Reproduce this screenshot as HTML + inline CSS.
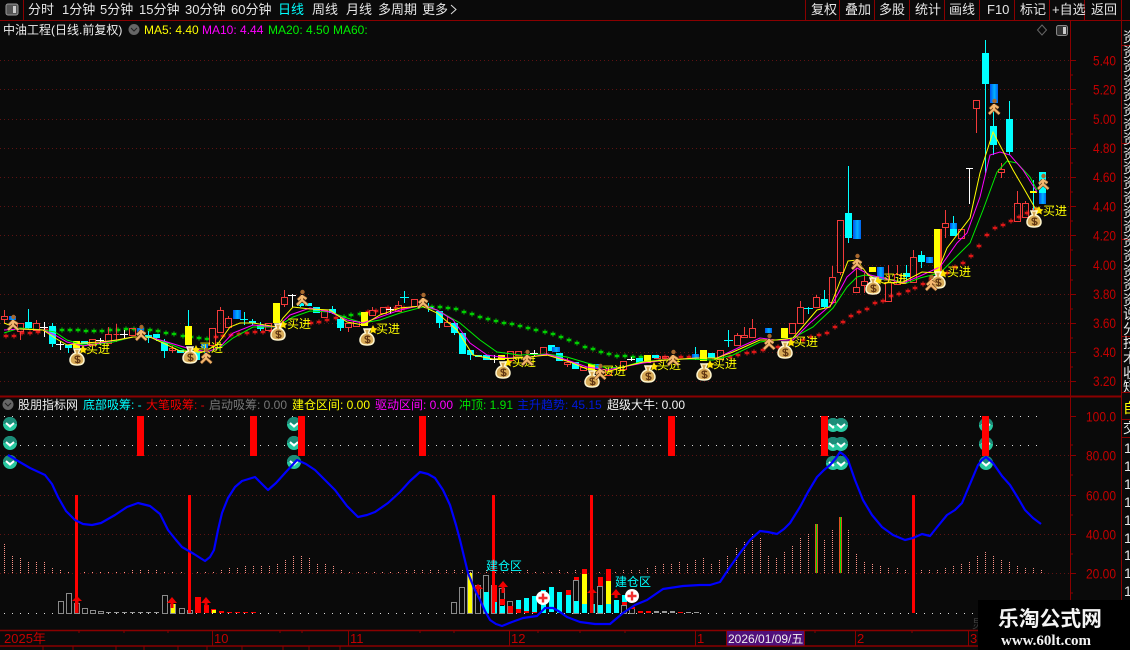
<!DOCTYPE html>
<html><head><meta charset="utf-8"><style>
html,body{margin:0;padding:0;background:#0a0a0a}
#w{position:relative;width:1130px;height:650px;overflow:hidden;background:#0a0a0a}
svg{position:absolute;left:0;top:0}
text{font-family:"Liberation Sans","WenQuanYi Zen Hei","Noto Sans CJK SC",sans-serif;font-size:12px}
.t{font-size:13px;fill:#e6e6e6}
.a{font-size:14px;fill:#c40000}
.m{fill:#ffff00;font-size:12px}
#c{position:absolute;left:1123px;top:30px;width:7px;height:362px;overflow:hidden;font:14px/14.6px "WenQuanYi Zen Hei","Noto Sans CJK SC",sans-serif;color:#e8e8e8;white-space:nowrap}
#d{position:absolute;left:1124px;top:440px;width:6px;height:160px;overflow:hidden;font:14px/17.9px "Liberation Sans",sans-serif;color:#e8e8e8}
</style></head><body><div id="w">
<svg width="1130" height="650" viewBox="0 0 1130 650">
<defs>
<linearGradient id="g" x1="0" x2="1" y1="0" y2="0"><stop offset="0" stop-color="#0050f0"/><stop offset=".55" stop-color="#00b4ff"/><stop offset="1" stop-color="#0060f0"/></linearGradient>
<marker id="sr" markerUnits="userSpaceOnUse" markerWidth="5" markerHeight="5" refX="2.500" refY="2.500"><path d="M2.500 0V5M0 1.500L5 3.500M0 3.500L5 1.500" stroke="#f01818" fill="none"/></marker>
<marker id="sg" markerUnits="userSpaceOnUse" markerWidth="5" markerHeight="5" refX="2.500" refY="2.500"><path d="M2.500 0V5M0 1.500L5 3.500M0 3.500L5 1.500" stroke="#00e000" fill="none"/></marker>
<symbol id="b" viewBox="0 0 16 18" overflow="visible"><path d="M5 1h6l-1.500 4c4 1.500 5.500 4.500 5.500 7 0 4-3 5-7 5s-7-1-7-5c0-2.500 1.500-5.500 5.500-7z" fill="#d8ab58" stroke="#fff6cf" stroke-width="1.500"/><path d="M11 9c-1.500-1.500-5-1.300-5 .7 0 2.300 5 1 5 3.300 0 2-3.500 2-5 .6M8.500 7.500v8" stroke="#5c3210" stroke-width="1.200" fill="none"/></symbol>
<symbol id="h" viewBox="0 0 16 18" overflow="visible"><circle cx="8.500" cy="3" r="2.200" fill="#a8682e"/><path d="M8 6V11M8 7L4 11M8 7L12.500 10M8 11L3 16M8 11L13.500 16" stroke="#7a4a20" stroke-width="3.400" fill="none"/><path d="M8 6V11M8 7L4 11M8 7L12.500 10M8 11L3 16M8 11L13.500 16" stroke="#f4b870" stroke-width="2" fill="none"/></symbol>
<symbol id="v" viewBox="0 0 14 14" overflow="visible"><circle cx="7" cy="7" r="7" fill="#28c8a0"/><path d="M0 7a7 7 0 0 1 14 0z" fill="#1c8c78"/><path d="M3 6L7 9.500L11 6" stroke="#fff" stroke-width="2" fill="none"/></symbol>
<symbol id="p" viewBox="0 0 14 14" overflow="visible"><circle cx="7" cy="7" r="7" fill="#fff"/><path d="M7 2.500V11.500M2.500 7H11.500" stroke="#f03030" stroke-width="2.400"/></symbol>
</defs>

<!-- top bar -->
<path d="M0 20.500H1130M23.500 0V20" stroke="#8a0000" fill="none"/>
<path d="M805.500 0V20M839.500 0V20M874.500 0V20M909.500 0V20M944.500 0V20M979.500 0V20M1014.500 0V20M1049.500 0V20M1084.500 0V20M1121.500 0V20" stroke="#8a0000"/>
<rect x="6" y="4" width="12" height="11" rx="2" fill="#555" stroke="#9a9a9a"/><rect x="13" y="6" width="3" height="7" fill="#ccc"/>
<text class="t" x="28" y="14">分时</text><text class="t" x="62" y="14">1分钟</text><text class="t" x="100" y="14">5分钟</text><text class="t" x="139" y="14">15分钟</text><text class="t" x="185" y="14">30分钟</text><text class="t" x="231" y="14">60分钟</text>
<text class="t" x="278" y="14" style="fill:#00ffff">日线</text><text class="t" x="312" y="14">周线</text><text class="t" x="346" y="14">月线</text><text class="t" x="378" y="14">多周期</text><text class="t" x="422" y="14">更多</text>
<path d="M451 5L456 9.500L451 14" stroke="#ddd" fill="none"/>
<text class="t" x="811" y="14">复权</text><text class="t" x="845" y="14">叠加</text><text class="t" x="879" y="14">多股</text><text class="t" x="915" y="14">统计</text><text class="t" x="949" y="14">画线</text><text class="t" x="987" y="14">F10</text><text class="t" x="1020" y="14">标记</text><text class="t" x="1052" y="14">+自选</text><text class="t" x="1091" y="14">返回</text>

<!-- row 2 -->
<text x="3" y="34" style="fill:#eee">中油工程(日线.前复权)</text>
<circle cx="134" cy="29.500" r="5.500" fill="#666"/><path d="M131 28L134 31L137 28" stroke="#222" fill="none"/>
<text class="m" x="144" y="34">MA5: 4.40</text><text x="202" y="34" style="fill:#ff00ff">MA10: 4.44</text><text x="268" y="34" style="fill:#00f000">MA20: 4.50</text><text x="333" y="34" style="fill:#00f000">MA60:</text>
<path d="M1042 25L1046.500 30L1042 35L1037.500 30z" stroke="#666" fill="none"/>
<rect x="1056.500" y="25.500" width="11" height="10" rx="2" fill="#333" stroke="#888"/><rect x="1063" y="27" width="3" height="7" fill="#ccc"/>

<!-- frame -->
<path d="M1070.500 20V630M1121.500 20V650M1122 45.500H1130M1122 143.500H1130M1122 239.500H1130M1122 336.500H1130M1122 392.500H1130M1122 419.500H1130M1122 437.500H1130" stroke="#8a0000" fill="none"/>
<path d="M0 396.500H1121" stroke="#8a0000" stroke-width="2"/>
<path d="M0 630.500H978M0 646H978" stroke="#8a0000" stroke-width="1.500"/>

<!-- price grid -->
<path d="M0 60.500H1070M0 89.500H1070M0 119.500H1070M0 148.500H1070M0 177.500H1070M0 206.500H1070M0 235.500H1070M0 265.500H1070M0 294.500H1070M0 323.500H1070M0 352.500H1070M0 381.500H1070" stroke="#5e1212" stroke-dasharray="1 3"/>
<path d="M1070 60.500h6M1070 75h3M1070 89.500h6M1070 104h3M1070 119.500h6M1070 134h3M1070 148.500h6M1070 163h3M1070 177.500h6M1070 192h3M1070 206.500h6M1070 221h3M1070 235.500h6M1070 250h3M1070 265.500h6M1070 280h3M1070 294.500h6M1070 309h3M1070 323.500h6M1070 338h3M1070 352.500h6M1070 367h3M1070 381.500h6M1070 416.500h6M1070 445h3M1070 455.500h6M1070 475h3M1070 495.500h6M1070 515h3M1070 534.500h6M1070 554h3M1070 573.500h6M1070 593h3" stroke="#8a0000"/>
<g class="px">
<text class="a" x="1093" y="65.500" textLength="23" lengthAdjust="spacingAndGlyphs">5.40</text><text class="a" x="1093" y="94.500" textLength="23" lengthAdjust="spacingAndGlyphs">5.20</text><text class="a" x="1093" y="124" textLength="23" lengthAdjust="spacingAndGlyphs">5.00</text><text class="a" x="1093" y="153" textLength="23" lengthAdjust="spacingAndGlyphs">4.80</text><text class="a" x="1093" y="182" textLength="23" lengthAdjust="spacingAndGlyphs">4.60</text><text class="a" x="1093" y="211.500" textLength="23" lengthAdjust="spacingAndGlyphs">4.40</text><text class="a" x="1093" y="240.500" textLength="23" lengthAdjust="spacingAndGlyphs">4.20</text><text class="a" x="1093" y="270" textLength="23" lengthAdjust="spacingAndGlyphs">4.00</text><text class="a" x="1093" y="299" textLength="23" lengthAdjust="spacingAndGlyphs">3.80</text><text class="a" x="1093" y="328" textLength="23" lengthAdjust="spacingAndGlyphs">3.60</text><text class="a" x="1093" y="357" textLength="23" lengthAdjust="spacingAndGlyphs">3.40</text><text class="a" x="1093" y="386" textLength="23" lengthAdjust="spacingAndGlyphs">3.20</text>
<text class="a" x="1086" y="421.500" textLength="30" lengthAdjust="spacingAndGlyphs">100.0</text><text class="a" x="1086" y="460.500" textLength="30" lengthAdjust="spacingAndGlyphs">80.00</text><text class="a" x="1086" y="500.500" textLength="30" lengthAdjust="spacingAndGlyphs">60.00</text><text class="a" x="1086" y="539.500" textLength="30" lengthAdjust="spacingAndGlyphs">40.00</text><text class="a" x="1086" y="578.500" textLength="30" lengthAdjust="spacingAndGlyphs">20.00</text>
</g>

<!-- stars -->
<polyline fill="none" stroke="none" marker-start="url(#sr)" marker-mid="url(#sr)" marker-end="url(#sr)" points="6,336 14,336 22,333 30,333 38,332 46,330 216,337 223,336 231,335 239,334 247,333 255,332 263,332 271,331 311,323 319,322 327,320 336,318 368,312 376,311 388,308 396,308 404,308 657,357 665,357 681,357 689,357 697,357 713,357 730,357 738,355 747,353 754,352 763,350 778,347 803,340 811,337 819,335 827,333 835,327 843,322 851,316 859,312 867,309 875,303 883,301 891,296 899,294 908,291 915,288 923,284 931,279 947,273 955,267 963,263 971,256 979,246 987,235 995,228 1003,225 1011,221 1019,217 1027,213 1035,209"/>
<polyline fill="none" stroke="none" marker-start="url(#sg)" marker-mid="url(#sg)" marker-end="url(#sg)" points="54,330 62,330 70,330 78,330 86,331 94,331 102,331 110,330 118,330 126,329 134,329 142,329 150,330 158,331 166,333 174,334 183,336 191,337 199,338 207,339 344,317 351,315 360,314 432,307 440,307 448,308 456,309 464,312 472,314 480,317 488,319 496,321 504,323 512,324 520,326 528,328 536,330 545,332 553,334 561,337 569,340 577,343 585,347 593,349 601,352 609,354 617,356 625,356 633,357 641,357"/>

<!-- red candles -->
<path fill="none" stroke="#f23a3a" d="M1.500 316.500h6v3h-6zM4.500 310V316M4.500 320V323M17.500 323.500h6v8h-6zM20.500 332V340M33.500 323.500h6v7h-6zM36.500 320V323M89.500 339.500h6v6h-6zM105.500 334.500h6v9h-6zM108.500 327V334M108.500 344V346M113.500 334.500h6M116.500 324V342M129.500 328.500h6v7h-6zM169.500 348.500h6v2h-6zM172.500 346V353M209.500 328.500h6v17h-6zM217.500 310.500h6v22h-6zM220.500 307V310M225.500 318.500h6v9h-6zM228.500 316V318M265.500 323.500h6v7h-6zM281.500 297.500h6v7h-6zM284.500 290V297M284.500 305V307M321.500 310.500h6v7h-6zM345.500 323.500h6v4h-6zM348.500 328V332M353.500 321.500h6v5h-6zM369.500 310.500h6v5h-6zM372.500 307V310M380.500 307.500h6v6h-6zM395.500 305.500h6v6h-6zM398.500 301V305M411.500 299.500h6v7h-6zM444.500 322.500h6v4h-6zM447.500 317V322M507.500 351.500h6v9h-6zM515.500 351.500h6v4h-6zM540.500 347.500h6v8h-6zM564.500 362.500h6v2h-6zM567.500 358V362M567.500 365V367M580.500 367.500h6v3h-6zM605.500 370.500h6v5h-6zM620.500 361.500h6v8h-6zM654.500 356.500h6v2h-6zM662.500 356.500h6v2h-6zM717.500 350.500h6v9h-6zM734.500 335.500h6v10h-6zM737.500 333V335M741.500 335.500h6v2h-6zM744.500 327V335M749.500 328.500h6v9h-6zM752.500 319V328M789.500 323.500h6v10h-6zM797.500 307.500h6v16h-6zM800.500 301V307M813.500 297.500h6v10h-6zM816.500 295V297M829.500 277.500h6v25h-6zM832.500 266V277M837.500 220.500h6v52h-6zM840.500 272V275M853.500 287.500h6v5h-6zM856.500 268V287M861.500 281.500h6v4h-6zM864.500 273V281M864.500 286V293M885.500 282.500h6v19h-6zM888.500 265V282M894.500 274.500h6v10h-6zM897.500 265V274M910.500 257.500h6v25h-6zM913.500 250V257M942.500 223.500h6v4h-6zM945.500 210V223M945.500 228V238M958.500 229.500h6v9h-6zM973.500 100.500h6v8h-6zM976.500 109V133M998.500 169.500h6v3h-6zM1001.500 163V169M1001.500 173V178M1014.500 203.500h6v18h-6zM1017.500 191V203M1022.500 203.500h6v14h-6zM1025.500 201V203M1032.500 208.500h6v4h-6z"/>
<!-- cyan wicks -->
<path stroke="#00ffff" fill="none" d="M28.500 309V330M52.500 323V347M68.500 345V353M148.500 331V343M156.500 334V341M164.500 339V358M188.500 310V326M196.500 350V361M204.500 348V360M244.500 312V325M240 319.500H248M252.500 319V325M260.500 322V331M300.500 299V307M332.500 306V314M340.500 317V331M404.500 291V303M400 297.500H409M428.500 303V312M424 307.500H433M439.500 311V328M454.500 322V335M470.500 350V360M695.500 347V360M728.500 330V347M724 340.500H733M808.500 307V314M804 308.500H813M824.500 290V308M848.500 166V243M906.500 265V283M921.500 251V268M953.500 216V229M985.500 40V173M993.500 111V155M1009.500 101V155M1033.500 180V210"/>
<!-- cyan bodies -->
<path fill="#00ffff" d="M25 322h7v6h-7zM49 326h7v18h-7zM65 345h7v3h-7zM81 341h7v3h-7zM145 335h7v3h-7zM153 334h7v4h-7zM161 342h7v9h-7zM177 350h7v3h-7zM193 352h7v8h-7zM249 321h7v2h-7zM257 325h7v4h-7zM297 303h7v3h-7zM305 303h7v3h-7zM313 307h7v6h-7zM329 309h7v4h-7zM337 319h7v9h-7zM436 311h7v12h-7zM451 323h7v10h-7zM459 333h7v21h-7zM467 350h7v5h-7zM475 355h7v2h-7zM483 355h7v5h-7zM548 345h7v6h-7zM556 353h7v8h-7zM572 362h7v7h-7zM636 358h7v5h-7zM652 355h7v3h-7zM708 353h7v5h-7zM821 299h7v8h-7zM845 213h7v25h-7zM903 273h7v4h-7zM918 255h7v7h-7zM950 229h7v7h-7zM982 53h7v31h-7zM990 126h7v19h-7zM1006 119h7v33h-7zM1039 172h7v21h-7z"/>
<!-- blue bodies -->
<g fill="url(#g)"><rect x="9" y="316" width="7" height="4"/><rect x="137" y="328" width="7" height="5"/><rect x="201" y="344" width="7" height="4"/><rect x="233" y="310" width="8" height="9"/><rect x="552" y="347" width="8" height="5"/><rect x="594" y="364" width="7" height="4"/><rect x="692" y="354" width="7" height="5"/><rect x="765" y="328" width="7" height="5"/><rect x="853" y="220" width="8" height="19"/><rect x="877" y="267" width="7" height="13"/><rect x="926" y="257" width="7" height="6"/><rect x="950" y="223" width="7" height="6"/><rect x="990" y="84" width="8" height="19"/><rect x="1039" y="193" width="7" height="11"/></g>
<!-- yellow bodies -->
<path fill="#ffff00" d="M73 341h7v7h-7zM185 326h7v19h-7zM273 303h7v20h-7zM361 312h7v14h-7zM498 355h7v5h-7zM588 364h7v6h-7zM644 355h7v8h-7zM700 350h7v11h-7zM781 328h7v10h-7zM869 267h7v5h-7zM934 229h7v43h-7zM1030 191h7v2h-7z"/>
<rect x="940" y="229" width="2" height="43" fill="#ff4a2a"/>
<!-- white crosses -->
<path stroke="#fff" fill="none" d="M44.500 322V337M40 327.500H48M60.500 341V350M56 344.500H64M100.500 338V345M96 340.500H104M124.500 330V338M120 334.500H128M292.500 294V307M288 295.500H296M390.500 307V314M386 309.500H394M494.500 355V363M490 359.500H498M534.500 350V356M530 353.500H538M631.500 357V361M627 359.500H635M969.500 168V204M966 168.500H973"/>

<!-- MA lines -->
<polyline fill="none" stroke="#00f000" points="4,333 20,328 43,330 55,332 67,340 83,345 100,344 113,342 133,337 150,337 167,343 187,351 207,352 220,348 233,338 253,327 277,327 293,317 310,311 330,312 347,318 363,323 380,320 400,313 423,307 437,310 460,323 480,340 497,352 520,355 547,354 567,357 587,363 607,368 623,367 640,362 663,360 687,359 713,360 733,355 760,342 775,340 793,338 813,327 833,308 847,287 857,277 865,275 877,277 893,280 907,283 920,278 940,273 953,260 970,243 983,210 997,172 1007,161 1017,163 1030,177 1037,190"/>
<polyline fill="none" stroke="#ff00ff" points="4,330 20,329 43,330 55,335 67,342 83,346 100,343 117,340 133,337 150,337 167,342 187,348 207,352 220,347 233,333 253,325 277,327 290,315 310,308 330,312 347,320 363,323 380,317 400,310 423,305 437,310 453,320 470,343 487,355 507,358 530,357 547,354 567,360 587,367 607,370 623,367 643,363 667,360 697,358 717,358 740,347 760,338 775,340 793,340 810,323 833,303 847,277 857,268 870,275 883,278 903,283 920,276 940,267 957,243 967,233 980,197 990,155 1000,152 1010,155 1023,170 1037,192"/>
<polyline fill="none" stroke="#ffff00" points="4,323 20,329 43,330 55,338 67,345 83,343 100,342 117,340 133,337 150,337 163,343 180,351 203,352 217,345 230,327 240,323 253,323 277,327 283,318 293,307 310,309 330,310 347,322 363,325 380,315 400,308 422,306 437,313 457,330 473,355 493,359 520,358 547,355 570,362 587,369 607,372 623,367 643,362 667,360 697,358 717,358 733,352 760,340 777,340 793,338 817,310 830,307 848,261 857,260 868,275 883,283 903,282 922,272 937,273 947,248 970,218 980,173 993,132 1013,170 1023,187 1035,208 1040,208"/>

<!-- buy labels -->
<g class="m"><text class="m" x="86" y="353">买进</text><text class="m" x="287" y="328">买进</text><text class="m" x="376" y="333">买进</text><text class="m" x="199" y="352">买进</text><text class="m" x="512" y="366">买进</text><text class="m" x="602" y="375">买进</text><text class="m" x="657" y="369">买进</text><text class="m" x="713" y="368">买进</text><text class="m" x="794" y="346">买进</text><text class="m" x="883" y="283">买进</text><text class="m" x="947" y="276">买进</text><text class="m" x="1043" y="215">买进</text></g>
<g fill="#ffe000"><path d="M83 345l1.500 3 3 .5-2.200 2 .5 3-2.800-1.500-2.800 1.500.5-3-2.200-2 3-.5zM283 320l1.500 3 3 .5-2.200 2 .5 3-2.800-1.500-2.800 1.500.5-3-2.200-2 3-.5zM373 325l1.500 3 3 .5-2.200 2 .5 3-2.800-1.500-2.800 1.500.5-3-2.200-2 3-.5zM196 345l1.500 3 3 .5-2.200 2 .5 3-2.800-1.500-2.800 1.500.5-3-2.200-2 3-.5zM508 358l1.500 3 3 .5-2.200 2 .5 3-2.800-1.500-2.800 1.500.5-3-2.200-2 3-.5zM599 367l1.500 3 3 .5-2.200 2 .5 3-2.800-1.500-2.800 1.500.5-3-2.200-2 3-.5zM654 362l1.500 3 3 .5-2.200 2 .5 3-2.800-1.500-2.800 1.500.5-3-2.200-2 3-.5zM710 360l1.500 3 3 .5-2.200 2 .5 3-2.800-1.500-2.800 1.500.5-3-2.200-2 3-.5zM791 338l1.500 3 3 .5-2.200 2 .5 3-2.800-1.500-2.800 1.500.5-3-2.200-2 3-.5zM878 276l1.500 3 3 .5-2.200 2 .5 3-2.800-1.500-2.800 1.500.5-3-2.200-2 3-.5zM943 269l1.500 3 3 .5-2.200 2 .5 3-2.800-1.500-2.800 1.500.5-3-2.200-2 3-.5zM1039 206l1.500 3 3 .5-2.200 2 .5 3-2.800-1.500-2.800 1.500.5-3-2.200-2 3-.5z"/></g>

<!-- bags -->
<use href="#b" x="69" y="348" width="16" height="18"/><use href="#b" x="182" y="346" width="16" height="18"/><use href="#b" x="270" y="323" width="16" height="18"/><use href="#b" x="359" y="328" width="16" height="18"/><use href="#b" x="495" y="361" width="16" height="18"/><use href="#b" x="584" y="370" width="16" height="18"/><use href="#b" x="640" y="365" width="16" height="18"/><use href="#b" x="696" y="363" width="16" height="18"/><use href="#b" x="777" y="341" width="16" height="18"/><use href="#b" x="865" y="277" width="16" height="18"/><use href="#b" x="930" y="271" width="16" height="18"/><use href="#b" x="1026" y="210" width="16" height="18"/>
<!-- men -->
<use href="#h" x="5" y="314" width="16" height="18"/><use href="#h" x="133" y="324" width="16" height="18"/><use href="#h" x="198" y="347" width="16" height="18"/><use href="#h" x="294" y="289" width="16" height="18"/><use href="#h" x="415" y="292" width="16" height="18"/><use href="#h" x="519" y="349" width="16" height="18"/><use href="#h" x="592" y="363" width="16" height="18"/><use href="#h" x="665" y="349" width="16" height="18"/><use href="#h" x="761" y="333" width="16" height="18"/><use href="#h" x="849" y="253" width="16" height="18"/><use href="#h" x="923" y="274" width="16" height="18"/><use href="#h" x="986" y="98" width="16" height="18"/><use href="#h" x="1035" y="173" width="16" height="18"/>

<!-- legend -->
<circle cx="8" cy="404.500" r="5.500" fill="#666"/><path d="M5 403L8 406L11 403" stroke="#222" fill="none"/>
<text x="18" y="409" style="fill:#eee">股朋指标网</text><text x="83" y="409" style="fill:#00ffff">底部吸筹: -</text><text x="146" y="409" style="fill:#f00000">大笔吸筹: -</text><text x="209" y="409" style="fill:#777">启动吸筹: 0.00</text><text x="292" y="409" style="fill:#ffff00">建仓区间: 0.00</text><text x="375" y="409" style="fill:#ff00ff">驱动区间: 0.00</text><text x="459" y="409" style="fill:#00e000">冲顶: 1.91</text><text x="517" y="409" style="fill:#0018e0">主升趋势: 45.15</text><text x="607" y="409" style="fill:#f4f4f4">超级大牛: 0.00</text>

<!-- lower grid -->
<path d="M4 416.500H1040M4 445.500H1040M4 613.500H1040" stroke="#ddd" stroke-dasharray="1 7"/>
<path d="M0 455.500H1070M0 495.500H1070M0 534.500H1070M0 573.500H1070" stroke="#5e1212" stroke-dasharray="1 3"/>

<!-- pink bars -->
<path stroke="#ff9488" stroke-dasharray="1 1" fill="none" d="M4.500 573V544M12.500 573V555M20.500 573V557M28.500 573V561M36.500 573V561M44.500 573V562M52.500 573V568M60.500 573V570M68.500 573V571M84.500 573V572M92.500 573V572M100.500 573V572M108.500 573V571M116.500 573V571M124.500 573V571M132.500 573V569M140.500 573V569M148.500 573V570M156.500 573V570M164.500 573V571M172.500 573V572M181.500 573V572M197.500 573V572M205.500 573V572M213.500 573V571M221.500 573V569M229.500 573V568M237.500 573V567M245.500 573V566M253.500 573V566M261.500 573V566M269.500 573V566M277.500 573V563M285.500 573V559M293.500 573V555M301.500 573V556M309.500 573V558M317.500 573V563M325.500 573V564M333.500 573V566M341.500 573V569M349.500 573V571M358.500 573V571M366.500 573V571M374.500 573V571M382.500 573V571M390.500 573V571M398.500 573V571M406.500 573V570M414.500 573V570M422.500 573V570M430.500 573V570M438.500 573V569M446.500 573V570M454.500 573V570M462.500 573V570M470.500 573V569M478.500 573V571M486.500 573V570M495.500 573V570M503.500 573V571M511.500 573V570M519.500 573V571M527.500 573V570M535.500 573V571M543.500 573V571M551.500 573V571M559.500 573V570M567.500 573V571M575.500 573V570M583.500 573V570M591.500 573V569M599.500 573V571M607.500 573V570M615.500 573V571M623.500 573V570M631.500 573V570M639.500 573V569M647.500 573V568M655.500 573V566M663.500 573V563M671.500 573V564M679.500 573V561M687.500 573V563M695.500 573V559M703.500 573V558M711.500 573V563M719.500 573V559M727.500 573V555M736.500 573V548M744.500 573V541M752.500 573V533M760.500 573V537M768.500 573V556M776.500 573V557M784.500 573V552M792.500 573V546M800.500 573V538M808.500 573V534M824.500 573V539M832.500 573V529M848.500 573V529M856.500 573V554M864.500 573V561M872.500 573V563M880.500 573V565M888.500 573V567M897.500 573V568M905.500 573V569M921.500 573V569M929.500 573V570M937.500 573V569M945.500 573V567M953.500 573V566M961.500 573V564M969.500 573V561M977.500 573V556M985.500 573V551M993.500 573V556M1001.500 573V560M1009.500 573V562M1017.500 573V565M1025.500 573V568M1033.500 573V568M1041.500 573V570"/>
<path fill="#e05020" d="M815 524h3v49h-3zM839 517h3v56h-3z"/><path fill="#00e000" d="M816 524h1v49h-1zM840 517h1v56h-1z"/>

<!-- lower histogram gray hollow -->
<path fill="none" stroke="#8a8a8a" stroke-width="1" d="M58.500 601.500h5v12h-5zM66.500 593.500h5v20h-5zM74.500 603.500h5v10h-5zM82.500 608.500h5v5h-5zM90.500 610.500h5v3h-5zM98.500 611.500h5v2h-5zM162.500 595.500h5v18h-5zM170.500 604.500h5v9h-5zM179.500 608.500h5v5h-5zM187.500 610.500h5v3h-5zM451.500 602.500h5v11h-5zM459.500 587.500h5v26h-5zM467.500 570.500h5v43h-5zM475.500 585.500h5v28h-5zM483.500 575.500h5v38h-5zM491.500 585.500h5v28h-5zM499.500 588.500h5v25h-5zM507.500 601.500h5v12h-5zM573.500 580.500h5v33h-5zM597.500 586.500h5v27h-5zM621.500 605.500h5v8h-5zM629.500 608.500h5v5h-5z"/>
<path fill="#9a9a9a" d="M106 612h5v1h-5zM114 612h5v1h-5zM122 612h5v1h-5zM130 612h5v1h-5zM138 612h5v1h-5zM146 612h5v1h-5zM154 612h5v1h-5zM654 611h5v2h-5zM662 611h5v2h-5zM670 611h5v2h-5zM686 612h5v1h-5zM694 612h5v1h-5z"/>
<!-- red filled hist -->
<path fill="#ff0000" d="M195 597h6v16h-6zM204 605h5v8h-5zM211 609h5v4h-5zM219 611h5v2h-5zM227 612h5v1h-5zM235 612h5v1h-5zM243 612h5v1h-5zM251 612h5v1h-5zM492 585h5v17h-5zM500 599h5v6h-5zM508 606h5v7h-5zM516 609h5v4h-5zM524 611h5v2h-5zM532 612h5v1h-5zM574 577h5v3h-5zM566 590h5v5h-5zM582 569h5v5h-5zM598 577h5v9h-5zM606 569h5v12h-5zM622 602h5v3h-5zM630 607h5v2h-5zM638 611h5v2h-5zM646 611h5v2h-5zM678 612h5v1h-5z"/>
<!-- cyan hist -->
<path fill="#00ffff" d="M484 592h5v21h-5zM492 602h5v11h-5zM500 606h5v7h-5zM516 600h5v9h-5zM524 598h5v13h-5zM532 596h5v16h-5zM541 590h5v23h-5zM549 587h5v25h-5zM557 592h5v21h-5zM566 595h5v18h-5zM574 601h5v12h-5zM582 604h5v9h-5zM590 604h5v9h-5zM598 605h5v8h-5zM606 604h5v9h-5zM614 600h5v13h-5zM622 595h5v7h-5z"/>
<!-- yellow hist -->
<path fill="#ffff00" d="M171 604h4v9h-4zM212 610h4v3h-4zM468 573h4v40h-4zM582 574h5v30h-5zM606 581h5v23h-5z"/>
<!-- tall red -->
<path fill="#ff0000" d="M75 495h3v118h-3zM188 495h3v118h-3zM492 495h3v118h-3zM590 495h3v118h-3zM912 495h3v118h-3z"/>
<!-- red arrows -->
<path fill="#f00000" d="M72 601l5-5 5 5h-3.500v12h-3v-12zM167 603l5-6 5 6h-3.500v5h-3v-5zM201 603l5-6 5 6h-3.500v3h-3v-3zM473 589l5-5 5 5h-3.500v6h-3v-6zM498 587l5-6 5 6h-3.500v6h-3v-6zM587 593l5-5 5 5h-3.500v20h-3v-20zM611 595l5-6 5 6h-3.500v3h-3v-3z"/>

<!-- top red bars -->
<path fill="#ff0000" d="M137 416h7v40h-7zM250 416h7v40h-7zM668 416h7v40h-7zM419 416h7v40h-7z"/>
<!-- badges -->
<use href="#v" x="3" y="417" width="14" height="14"/><use href="#v" x="3" y="436" width="14" height="14"/><use href="#v" x="3" y="455" width="14" height="14"/>
<use href="#v" x="287" y="417" width="14" height="14"/><use href="#v" x="287" y="436" width="14" height="14"/><use href="#v" x="287" y="455" width="14" height="14"/>
<use href="#v" x="826" y="418" width="14" height="14"/><use href="#v" x="826" y="437" width="14" height="14"/><use href="#v" x="826" y="456" width="14" height="14"/>
<use href="#v" x="979" y="418" width="14" height="14"/><use href="#v" x="979" y="437" width="14" height="14"/><use href="#v" x="979" y="456" width="14" height="14"/>
<path fill="#ff0000" d="M298 416h7v40h-7zM821 416h7v40h-7zM982 416h7v40h-7z"/>
<use href="#v" x="834" y="418" width="14" height="14"/><use href="#v" x="834" y="437" width="14" height="14"/><use href="#v" x="834" y="456" width="14" height="14"/>

<!-- blue line -->
<polyline fill="none" stroke="#0000ff" stroke-width="2.200" stroke-linejoin="round" points="8,455 18,461 30,468 45,475 52,484 58,497 66,511 75,520 83,524 92,525 101,523 115,515 127,507 138,503 150,506 160,514 168,530 176,540 182,547 194,554 205,561 210,557 214,550 218,530 222,513 228,498 235,487 242,481 255,477 262,484 268,490 276,483 285,473 297,460 306,464 315,470 325,480 335,490 347,506 358,517 367,515 375,512 388,503 400,492 410,481 420,472 428,474 435,478 443,490 450,505 456,525 460,540 468,573 474,588 480,600 485,611 490,620 496,624 502,626 512,622 523,618 537,616 545,608 553,608 560,612 567,617 580,622 595,624 610,624 623,613 635,605 647,600 663,589 683,586 700,585 710,585 720,582 730,567 740,553 750,540 760,531 768,532 777,534 784,529 790,523 795,515 800,507 808,492 817,477 824,470 830,465 836,458 840,452 845,456 848,460 855,480 863,500 872,515 882,527 893,535 905,540 913,538 922,534 930,536 938,526 947,515 955,510 962,503 970,484 978,465 982,460 986,457 993,463 1002,476 1010,485 1018,498 1025,510 1033,518 1041,524"/>
<use href="#p" x="536" y="591" width="14" height="14"/><use href="#p" x="625" y="589" width="14" height="14"/>
<text x="486" y="570" style="fill:#00ffff;font-size:12px">建仓区</text><text x="615" y="586" style="fill:#00ffff;font-size:12px">建仓区</text>

<!-- bottom axis -->
<path stroke="#8a0000" fill="none" d="M212.500 630V646M348.500 630V646M509.500 630V646M695.500 630V646M855.500 630V646M968.500 630V646M79 630v3M124 630v3M168 630v3M280 630v3M302 630v3M420 630v3M454 630v3M538 630v3M580 630v3M625 630v3M745 630v3M815 630v3M912 630v3M43 646v4M73 646v4M116 646v4M144 646v4M178 646v4M207 646v4M242 646v4M283 646v4M309 646v4M340 646v4"/>
<g style="fill:#c40000"><text x="4" y="643" style="fill:#c40000;font-size:13px">2025年</text><text x="214" y="643" style="fill:#c40000;font-size:13px">10</text><text x="350" y="643" style="fill:#c40000;font-size:13px">11</text><text x="511" y="643" style="fill:#c40000;font-size:13px">12</text><text x="697" y="643" style="fill:#c40000;font-size:13px">1</text><text x="857" y="643" style="fill:#c40000;font-size:13px">2</text><text x="970" y="643" style="fill:#c40000;font-size:13px">3</text></g>
<rect x="726.500" y="630.500" width="78" height="15.500" fill="#50107a" stroke="#8a0000"/>
<text x="728" y="643" style="fill:#f0f0f0;font-size:12px">2026/01/09/五</text>
<text x="972" y="628" style="fill:#3a3a3a;font-size:12px">炅</text>

<!-- watermark -->
<rect x="978" y="600" width="152" height="50" fill="#000"/>
<text x="998" y="626" style="fill:#f4f4f4;font-size:20.800px;font-weight:bold;font-family:'Noto Sans CJK SC','WenQuanYi Zen Hei',sans-serif">乐淘公式网</text>
<text x="1001" y="645" style="fill:#f4f4f4;font-size:15px;font-weight:bold;font-family:'Liberation Serif',serif">www.60lt.com</text>
</svg>
<div id="c">资<br>资<br>资<br>资<br>资<br>资<br>资<br>资<br>资<br>资<br>资<br>资<br>资<br>资<br>资<br>资<br>资<br>资<br>资<br>说<br>分<br>技<br>术<br>收<br>短</div>
<div style="position:absolute;left:1123px;top:398px;width:7px;height:20px;overflow:hidden;font:14px/20px 'WenQuanYi Zen Hei','Noto Sans CJK SC',sans-serif;color:#ffff00">自</div>
<div style="position:absolute;left:1123px;top:419px;width:7px;height:18px;overflow:hidden;font:14px/18px 'WenQuanYi Zen Hei','Noto Sans CJK SC',sans-serif;color:#eee">交</div>
<div id="d">1<br>1<br>1<br>1<br>1<br>1<br>1<br>1<br>1</div>
</div></body></html>
